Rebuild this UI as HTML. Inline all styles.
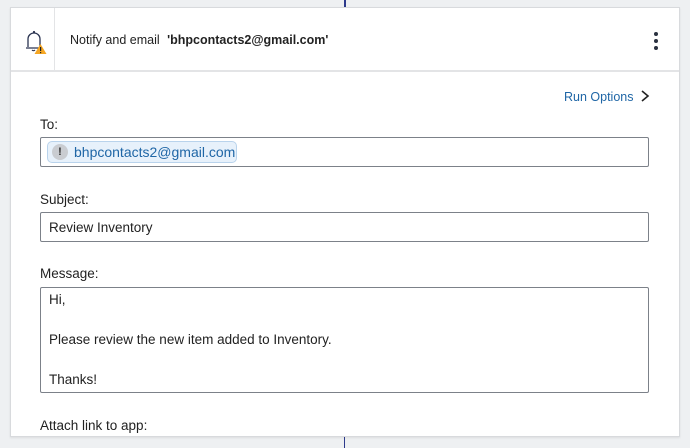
<!DOCTYPE html>
<html><head><meta charset="utf-8"><style>
*{box-sizing:border-box;margin:0;padding:0}
body{width:690px;height:448px;background:#eef0f2;font-family:"Liberation Sans",sans-serif;position:relative;overflow:hidden;color:#222}
.vline{position:absolute;left:344px;width:2px;background:#2d3a8c}
.card{position:absolute;left:10px;top:7px;width:670px;height:430px;background:#fff;border:1px solid #d8dadd;box-shadow:0 1px 2px rgba(0,0,0,.08)}
.hdr{position:absolute;left:0;top:0;width:100%;height:64px;border-bottom:2px solid #e3e4e6}
.icell{position:absolute;left:0;top:0;width:44px;height:64px;border-right:1px solid #e3e4e6}
.title{position:absolute;left:59px;top:25px;font-size:12.5px;color:#222}
.title b{margin-left:4px}
.dots{position:absolute;left:643px;top:24px}
.dots i{display:block;width:4px;height:4px;border-radius:2px;background:#2a3140;margin-bottom:3px}
.run{position:absolute;left:553px;top:82px;font-size:12.5px;color:#1f66a6}
.lbl{position:absolute;left:29px;font-size:13.5px;color:#222}
.box{position:absolute;left:29px;width:609px;border:1px solid #7c8189;border-radius:2px;font-size:13.5px;color:#222}
.chip{position:absolute;left:6px;top:3px;height:22px;width:190px;background:#e7f1fb;border:1px solid #b9d3ec;border-radius:5px;color:#1f66a6;font-size:14px;line-height:20px;padding-left:26px;white-space:nowrap}
.chip .ex{position:absolute;left:4px;top:2px;width:16px;height:16px;border-radius:8px;background:#c9ccd1;color:#333;font-weight:bold;font-size:11px;line-height:16px;text-align:center}
</style></head><body>
<div class="vline" style="top:0;height:7px"></div>
<div class="vline" style="top:437px;height:11px;width:1px"></div>
<div class="card">
 <div class="hdr">
  <div class="icell">
   <svg width="44" height="64" viewBox="0 0 44 64">
    <path d="M17 39 V31 a6 6 0 0 1 12 0 V39 M15 40 H31" fill="none" stroke="#2a3350" stroke-width="1.3"/>
    <circle cx="23" cy="24" r="1.1" fill="#2a3350"/>
    <path d="M21 42 a2 2 0 0 0 3 0" fill="none" stroke="#2a3350" stroke-width="1.2"/>
    <path d="M29.5 36 L35.5 46 H23.5 Z" fill="#f5a623"/>
    <rect x="29" y="39" width="1.2" height="4" fill="#222"/><rect x="29" y="44" width="1.2" height="1.2" fill="#222"/>
   </svg>
  </div>
  <div class="title">Notify and email <b>'bhpcontacts2@gmail.com'</b></div>
  <div class="dots"><i></i><i></i><i></i></div>
 </div>
 <div class="run">Run Options <svg width="10" height="12" viewBox="0 0 10 12" style="vertical-align:-1px;margin-left:3px"><path d="M2 1 L8 6 L2 11" fill="none" stroke="#222" stroke-width="1.6"/></svg></div>
 <div class="lbl" style="top:109px">To:</div>
 <div class="box" style="top:129px;height:30px"><div class="chip"><span class="ex">!</span>bhpcontacts2@gmail.com</div></div>
 <div class="lbl" style="top:184px">Subject:</div>
 <div class="box" style="top:204px;height:30px;padding:7px 8px">Review Inventory</div>
 <div class="lbl" style="top:258px">Message:</div>
 <div class="box" style="top:279px;height:106px;padding:2px 8px;line-height:20px">Hi,<br><br>Please review the new item added to Inventory.<br><br>Thanks!</div>
 <div class="lbl" style="top:410px">Attach link to app:</div>
</div>
</body></html>
